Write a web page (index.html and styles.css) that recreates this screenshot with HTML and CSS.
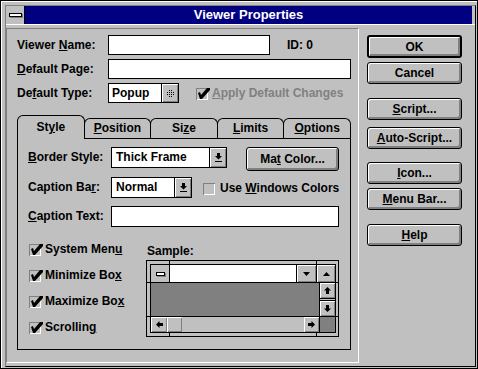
FILE: index.html
```html
<!DOCTYPE html>
<html lang="en">
<head>
    <meta charset="UTF-8">
    <meta name="viewport" content="width=device-width, initial-scale=1.0">
    <title>Viewer Properties</title>
    <link rel="stylesheet" href="styles.css">
</head>
<body>
    <div class="window">
        <div class="frame">
            <div class="titlebar">
                <div class="sysbox"><span class="sysbar"></span></div>
                <div class="title">Viewer Properties</div>
            </div>
            <div class="client">
                <div class="group">
                    <div class="row">
                        <span class="lbl">Viewer <u>N</u>ame:</span>
                        <div class="edit name-edit"></div>
                        <span class="id">ID: 0</span>
                    </div>
                    <div class="row row-next">
                        <span class="lbl"><u>D</u>efault Page:</span>
                        <div class="edit page-edit"></div>
                    </div>
                    <div class="row row-next">
                        <span class="lbl">De<u>f</u>ault Type:</span>
                        <div class="combo type-combo">
                            <span class="combo-text">Popup</span>
                            <span class="combo-btn">
                                <svg width="7" height="11" shape-rendering="crispEdges">
                                    <defs>
                                        <pattern id="dots" width="2" height="2" patternUnits="userSpaceOnUse">
                                            <rect width="1" height="1" fill="#000"/>
                                        </pattern>
                                    </defs>
                                    <polygon points="3.5,0 7,4.5 0,4.5" fill="url(#dots)"/>
                                    <polygon points="0,6 7,6 3.5,10.5" fill="url(#dots)"/>
                                </svg>
                            </span>
                        </div>
                        <span class="check disabled apply">
                            <svg width="14" height="13"><use href="#chk"/></svg>
                            <span><u>A</u>pply Default Changes</span>
                        </span>
                    </div>

                    <div class="tabs">
                        <div class="tab active">St<u>y</u>le</div>
                        <div class="tab"><u>P</u>osition</div>
                        <div class="tab">Si<u>z</u>e</div>
                        <div class="tab"><u>L</u>imits</div>
                        <div class="tab"><u>O</u>ptions</div>
                    </div>
                    <div class="tabpanel">
                        <div class="prow prow-a">
                            <span class="plbl"><u>B</u>order Style:</span>
                            <div class="combo border-combo">
                                <span class="combo-text">Thick Frame</span>
                                <span class="combo-btn"><svg width="7" height="9"><use href="#drop"/></svg></span>
                            </div>
                            <button class="btn mat-btn">Ma<u>t</u> Color...</button>
                        </div>
                        <div class="prow prow-b">
                            <span class="plbl">Caption Ba<u>r</u>:</span>
                            <div class="combo caption-combo">
                                <span class="combo-text">Normal</span>
                                <span class="combo-btn"><svg width="7" height="9"><use href="#drop"/></svg></span>
                            </div>
                            <span class="check wincolors">
                                <svg width="14" height="13"><use href="#box"/></svg>
                                <span>Use <u>W</u>indows Colors</span>
                            </span>
                        </div>
                        <div class="prow prow-c">
                            <span class="plbl"><u>C</u>aption Text:</span>
                            <div class="edit caption-edit"></div>
                        </div>

                        <div class="lower">
                            <div class="checks">
                                <span class="check"><svg width="14" height="13"><use href="#chk"/></svg><span>System Men<u>u</u></span></span>
                                <span class="check"><svg width="14" height="13"><use href="#chk"/></svg><span>Minimize Bo<u>x</u></span></span>
                                <span class="check"><svg width="14" height="13"><use href="#chk"/></svg><span>Maximize Bo<u>x</u></span></span>
                                <span class="check"><svg width="14" height="13"><use href="#chk"/></svg><span>Scrollin<u>g</u></span></span>
                            </div>
                            <div class="samplecol">
                                <div class="sample-lbl">Sample:</div>
                                <div class="sample">
                                    <div class="sample-inner">
                                        <div class="s-caption">
                                            <div class="s-sys"><span class="s-sysbar"></span></div>
                                            <div class="s-title"></div>
                                            <div class="bev s-min"><svg width="7" height="4"><use href="#tridown"/></svg></div>
                                            <div class="bev s-max"><svg width="7" height="4"><use href="#triup"/></svg></div>
                                        </div>
                                        <div class="s-body">
                                            <div class="s-client"></div>
                                            <div class="s-vscroll">
                                                <div class="bev s-arrow"><svg width="7" height="7"><use href="#up"/></svg></div>
                                                <div class="s-vtrack"></div>
                                                <div class="bev s-arrow"><svg width="7" height="7"><use href="#down"/></svg></div>
                                            </div>
                                            <div class="s-hscroll">
                                                <div class="bev s-left"><svg width="7" height="7"><use href="#left"/></svg></div>
                                                <div class="bev s-thumb"></div>
                                                <div class="s-htrack"></div>
                                                <div class="bev s-right"><svg width="7" height="7"><use href="#right"/></svg></div>
                                            </div>
                                            <div class="s-corner"></div>
                                        </div>
                                    </div>
                                </div>
                            </div>
                        </div>
                    </div>
                </div>

                <div class="buttons">
                    <button class="btn default">OK</button>
                    <button class="btn cancel">Cancel</button>
                    <button class="btn gap-big"><u>S</u>cript...</button>
                    <button class="btn gap-mid"><u>A</u>uto-Script...</button>
                    <button class="btn gap-big2"><u>I</u>con...</button>
                    <button class="btn cancel"><u>M</u>enu Bar...</button>
                    <button class="btn gap-big"><u>H</u>elp</button>
                </div>
            </div>
        </div>
    </div>

    <svg width="0" height="0" class="defs" shape-rendering="crispEdges">
        <symbol id="box" viewBox="0 0 14 13">
            <rect x="0" y="1" width="12" height="1" fill="#808080"/>
            <rect x="0" y="1" width="1" height="12" fill="#808080"/>
            <rect x="1" y="12" width="11" height="1" fill="#fff"/>
            <rect x="11" y="2" width="1" height="11" fill="#fff"/>
        </symbol>
        <symbol id="chk" viewBox="0 0 14 13">
            <rect x="0" y="1" width="12" height="1" fill="#808080"/>
            <rect x="0" y="1" width="1" height="12" fill="#808080"/>
            <rect x="1" y="12" width="11" height="1" fill="#fff"/>
            <rect x="11" y="2" width="1" height="11" fill="#fff"/>
            <polygon points="2,6 4,5 5,8 11,1 14,1 14,3 6,12 4,12" fill="#000" shape-rendering="auto"/>
        </symbol>
        <symbol id="drop" viewBox="0 0 7 9">
            <polygon points="2,0 5,0 5,3 7,3 3.5,6.5 0,3 2,3" fill="#000"/>
            <rect x="0" y="8" width="7" height="1" fill="#000"/>
        </symbol>
        <symbol id="up" viewBox="0 0 7 7">
            <polygon points="3.5,0 7,3.5 5,3.5 5,7 2,7 2,3.5 0,3.5" fill="#000"/>
        </symbol>
        <symbol id="down" viewBox="0 0 7 7">
            <polygon points="2,0 5,0 5,3.5 7,3.5 3.5,7 0,3.5 2,3.5" fill="#000"/>
        </symbol>
        <symbol id="left" viewBox="0 0 7 7">
            <polygon points="0,3.5 3.5,0 3.5,2 7,2 7,5 3.5,5 3.5,7" fill="#000"/>
        </symbol>
        <symbol id="right" viewBox="0 0 7 7">
            <polygon points="7,3.5 3.5,0 3.5,2 0,2 0,5 3.5,5 3.5,7" fill="#000"/>
        </symbol>
        <symbol id="tridown" viewBox="0 0 7 4">
            <polygon points="0,0 7,0 3.5,4" fill="#000"/>
        </symbol>
        <symbol id="triup" viewBox="0 0 7 4">
            <polygon points="3.5,0 7,4 0,4" fill="#000"/>
        </symbol>
    </svg>
</body>
</html>
```

FILE: styles.css
```css
* {
    box-sizing: border-box;
}
body {
    margin: 0;
    background: #c0c0c0;
    font-family: "Liberation Sans", Arial, sans-serif;
    font-size: 12px;
    font-weight: bold;
    color: #000;
}
u {
    text-underline-offset: 1px;
}
svg {
    display: block;
    flex-shrink: 0;
}
.defs {
    overflow: hidden;
}

/* window frame */
.window {
    width: 478px;
    height: 369px;
    display: flex;
    background: #c0c0c0;
    border: 1px solid #000;
    padding: 4px 1px 1px 4px;
    box-shadow: inset 1px 1px 0 #fff;
}
.frame {
    flex: 1;
    display: flex;
    flex-direction: column;
    border-left: 1px solid #808080;
    border-top: 1px solid #808080;
    border-right: 1px solid #000;
    border-bottom: 1px solid #000;
}
.titlebar {
    height: 19px;
    display: flex;
    padding-right: 3px;
    border-bottom: 1px solid #fff;
}
.sysbox {
    width: 19px;
    border-right: 1px solid #000;
    display: flex;
    align-items: center;
    justify-content: center;
}
.sysbar {
    width: 13px;
    height: 4px;
    background: #fff;
    border: 1px solid #000;
    box-shadow: 1px 1px 0 #808080;
}
.title {
    flex: 1;
    background: #000080;
    color: #fff;
    font-size: 13px;
    line-height: 18px;
    text-align: center;
}
.client {
    flex: 1;
    display: flex;
}

/* left group */
.group {
    width: 353px;
    margin: 3px 0;
    border: 1px solid;
    border-color: #808080 #fff #fff #808080;
    padding: 6px 7px 0 10px;
}
.row {
    display: flex;
    align-items: center;
    height: 20px;
}
.row-next {
    margin-top: 4px;
}
.lbl {
    width: 91px;
}
.edit {
    height: 20px;
    background: #fff;
    border: 1px solid #000;
}
.name-edit {
    width: 162px;
}
.page-edit {
    width: 243px;
}
.id {
    margin-left: 17px;
}
.combo {
    display: flex;
    height: 20px;
    background: #fff;
    border: 1px solid #000;
}
.combo-text {
    flex: 1;
    padding-left: 3px;
    line-height: 18px;
}
.combo-btn {
    width: 17px;
    border-left: 1px solid #000;
    background: #c0c0c0;
    box-shadow: inset 1px 1px 0 #fff, inset -1px -1px 0 #808080;
    display: flex;
    align-items: center;
    justify-content: center;
}
.type-combo {
    width: 71px;
}
.check {
    display: flex;
    align-items: center;
    gap: 2px;
    height: 14px;
    white-space: nowrap;
    flex-shrink: 0;
}
.disabled {
    color: #808080;
}
.apply {
    margin-left: 17px;
}

/* tabs */
.tabs {
    display: flex;
    align-items: flex-end;
    height: 23px;
    margin-top: 12px;
}
.tab {
    flex: 1;
    height: 20px;
    margin-left: -1px;
    padding-top: 2px;
    line-height: 14px;
    text-align: center;
    border: 1px solid #000;
    border-bottom: none;
    border-radius: 6px 6px 0 0;
}
.tab.active {
    margin-left: 0;
    height: 24px;
    margin-bottom: -1px;
    padding-top: 4px;
    background: #c0c0c0;
    position: relative;
    z-index: 1;
}
.tabpanel {
    height: 212px;
    border: 1px solid #000;
    padding: 8px 11px 0 10px;
}
.prow {
    display: flex;
    align-items: flex-start;
}
.plbl {
    width: 83px;
    line-height: 21px;
    flex-shrink: 0;
}
.prow .combo,
.prow .edit {
    height: 21px;
    flex-shrink: 0;
}
.prow .combo-text {
    line-height: 19px;
    padding-left: 4px;
}
.prow-a {
    height: 24px;
}
.prow-b {
    margin-top: 6px;
}
.prow-c {
    margin-top: 8px;
}
.border-combo {
    width: 116px;
}
.caption-combo {
    width: 81px;
}
.prow .caption-edit {
    flex: 1;
}
.wincolors {
    margin-left: 11px;
    margin-top: 4px;
    gap: 3px;
}
.lower {
    display: flex;
    margin-top: 15px;
}
.checks {
    width: 118px;
    padding-left: 1px;
    display: flex;
    flex-direction: column;
    gap: 12px;
}
.samplecol {
    display: flex;
    flex-direction: column;
}
.sample-lbl {
    margin-top: 2px;
    height: 14px;
    line-height: 14px;
    padding-left: 1px;
}

/* sample window preview */
.sample {
    width: 193px;
    height: 77px;
    margin-top: 2px;
    border: 1px solid #000;
    padding: 3px 2px 3px 3px;
    background:
        linear-gradient(#000, #000) 22px 0 / 1px 100% no-repeat,
        linear-gradient(#000, #000) 169px 0 / 1px 100% no-repeat,
        linear-gradient(#000, #000) 0 21px / 100% 1px no-repeat,
        linear-gradient(#000, #000) 0 55px / 100% 1px no-repeat,
        #c0c0c0;
}
.sample-inner {
    height: 69px;
    border: 1px solid #000;
    background: #000;
    display: flex;
    flex-direction: column;
    gap: 1px;
}
.s-caption {
    height: 17px;
    display: flex;
    gap: 1px;
}
.s-sys {
    width: 18px;
    background: #c0c0c0;
    display: flex;
    align-items: center;
    justify-content: center;
}
.s-sysbar {
    width: 9px;
    height: 4px;
    background: #fff;
    border: 1px solid #000;
    box-shadow: 1px 1px 0 #808080;
}
.s-title {
    flex: 1;
    background: #fff;
}
.bev {
    background: #c0c0c0;
    box-shadow: inset 1px 1px 0 #fff, inset -1px -1px 0 #808080;
    display: flex;
    align-items: center;
    justify-content: center;
}
.s-min {
    width: 19px;
}
.s-max {
    width: 18px;
}
.s-body {
    flex: 1;
    display: grid;
    grid-template-columns: 168px 15px;
    grid-template-rows: 33px 15px;
    gap: 1px;
}
.s-client {
    background: #808080;
}
.s-vscroll {
    display: flex;
    flex-direction: column;
    gap: 1px;
}
.s-arrow {
    height: 15px;
}
.s-vtrack {
    flex: 1;
    background: #c0c0c0;
}
.s-hscroll {
    display: flex;
    background: #c0c0c0;
}
.s-left {
    width: 16px;
}
.s-thumb {
    width: 15px;
}
.s-htrack {
    flex: 1;
}
.s-right {
    width: 15px;
}
.s-corner {
    background: #808080;
}

/* right buttons */
.buttons {
    width: 95px;
    margin-left: 8px;
    padding-top: 10px;
    display: flex;
    flex-direction: column;
}
.btn {
    display: block;
    width: 95px;
    height: 22px;
    padding: 0;
    font: inherit;
    color: #000;
    text-align: center;
    background: #c0c0c0;
    border: 1px solid #000;
    border-radius: 3px;
    box-shadow: inset 1px 1px 0 #fff, inset -1px -1px 0 #808080, inset -2px -2px 0 #808080;
}
.btn.default {
    height: 23px;
    border-width: 2px;
}
.cancel {
    margin-top: 4px;
}
.gap-big {
    margin-top: 14px;
}
.gap-mid {
    margin-top: 7px;
}
.gap-big2 {
    margin-top: 13px;
}
.mat-btn {
    width: 93px;
    height: 24px;
    margin-left: 19px;
    flex-shrink: 0;
}
```
